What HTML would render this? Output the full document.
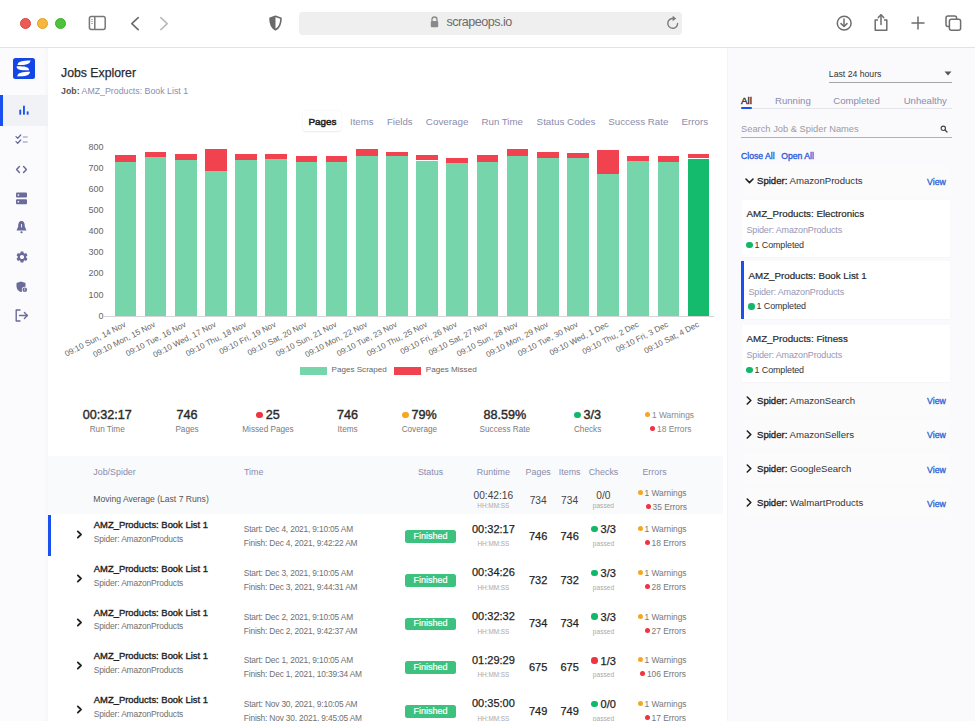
<!DOCTYPE html>
<html><head><meta charset="utf-8"><title>Jobs Explorer</title><style>
*{margin:0;padding:0;box-sizing:border-box}
html,body{width:975px;height:721px;overflow:hidden;background:#fff;font-family:"Liberation Sans",sans-serif}
#tb{position:absolute;left:0;top:0;width:975px;height:48px;background:#fff;border-bottom:1px solid #e3e3e3}
.dot{position:absolute;top:17.5px;width:11px;height:11px;border-radius:50%}
#addr{position:absolute;left:299px;top:12px;width:383px;height:23px;background:#efefef;border-radius:4px}
#sb{position:absolute;left:0;top:48px;width:48px;height:673px;background:#fbfbfd;box-shadow:inset -3px 0 3px -1px rgba(0,0,20,0.025)}
#sb svg{}
#rp{position:absolute;left:727px;top:48px;width:248px;height:673px;background:#fafafc;border-left:1px solid #f4f4f6}
.t{position:absolute;white-space:nowrap;line-height:1.15}
.lab{position:absolute;right:0;top:0;font-size:8.15px;color:#666;transform-origin:100% 0;transform:rotate(-27deg);line-height:9px}
.dd{display:inline-block;width:5px;height:5px;border-radius:50%;margin-right:2px;vertical-align:1px}
</style></head>
<body>

<div id="tb">
  <div class="dot" style="left:19.5px;background:#ee5b55;border:0.5px solid #d9473f"></div>
  <div class="dot" style="left:37px;background:#f6b73c;border:0.5px solid #dca12b"></div>
  <div class="dot" style="left:55px;background:#4fc23d;border:0.5px solid #3fae2f"></div>
  <svg style="position:absolute;left:88px;top:15px" width="19" height="16" viewBox="0 0 19 16">
    <rect x="1.4" y="1.6" width="15.8" height="12.8" rx="2" fill="none" stroke="#777" stroke-width="1.5"/>
    <line x1="6.8" y1="1.5" x2="6.8" y2="14" stroke="#777" stroke-width="1.5"/>
    <line x1="3.2" y1="4.5" x2="4.8" y2="4.5" stroke="#999" stroke-width="0.9"/>
    <line x1="3.2" y1="6.5" x2="4.8" y2="6.5" stroke="#999" stroke-width="0.9"/>
    <line x1="3.2" y1="8.5" x2="4.8" y2="8.5" stroke="#999" stroke-width="0.9"/>
  </svg>
  <svg style="position:absolute;left:128px;top:15px" width="14" height="17" viewBox="0 0 14 17">
    <polyline points="10.2,2.6 3.8,8.6 10.2,14.6" fill="none" stroke="#6e6e6e" stroke-width="1.7" stroke-linecap="round" stroke-linejoin="round"/>
  </svg>
  <svg style="position:absolute;left:157px;top:15px" width="14" height="17" viewBox="0 0 14 17">
    <polyline points="3.8,2.6 10.2,8.6 3.8,14.6" fill="none" stroke="#b9b9b9" stroke-width="1.5" stroke-linecap="round" stroke-linejoin="round"/>
  </svg>
  <svg style="position:absolute;left:268px;top:15px" width="15" height="16" viewBox="0 0 15 16">
    <path d="M7.5 1.2 L13 3.2 C13 9 11.5 12.6 7.5 14.8 C3.5 12.6 2 9 2 3.2 Z" fill="none" stroke="#6a6a6a" stroke-width="1.6" stroke-linejoin="round"/>
    <path d="M7.5 1.2 L2 3.2 C2 9 3.5 12.6 7.5 14.8 Z" fill="#6a6a6a"/>
  </svg>
  <div id="addr"></div>
  <svg style="position:absolute;left:430px;top:16px" width="9" height="12" viewBox="0 0 9 12">
    <path d="M2 5 V3.5 A2.5 2.5 0 0 1 7 3.5 V5" fill="none" stroke="#8a8a8a" stroke-width="1.3"/>
    <rect x="0.8" y="5" width="7.4" height="6.2" rx="1" fill="#8a8a8a"/>
  </svg>
  <div style="position:absolute;left:446.5px;top:15px;font-size:12.6px;color:#6c6c6c;letter-spacing:-0.52px">scrapeops.io</div>
  <svg style="position:absolute;left:666px;top:15.4px" width="14" height="15" viewBox="0 0 14 15">
    <path d="M11.6 8.4 A4.9 4.9 0 1 1 7.2 3.5" fill="none" stroke="#7a7a7a" stroke-width="1.4" stroke-linecap="round"/>
    <path d="M6.6 0.8 L10.2 3.5 L6.6 6.2 Z" fill="#7a7a7a"/>
  </svg>
  <svg style="position:absolute;left:835px;top:14px" width="18" height="18" viewBox="0 0 18 18">
    <circle cx="9.2" cy="9.2" r="6.9" fill="none" stroke="#6e6e6e" stroke-width="1.5"/>
    <line x1="9" y1="5" x2="9" y2="12.3" stroke="#6e6e6e" stroke-width="1.5" stroke-linecap="round"/>
    <polyline points="6,9.6 9,12.5 12,9.6" fill="none" stroke="#6e6e6e" stroke-width="1.5" stroke-linecap="round" stroke-linejoin="round"/>
  </svg>
  <svg style="position:absolute;left:872px;top:13px" width="18" height="19" viewBox="0 0 18 19">
    <path d="M6 7 H3.2 V17.2 H14.8 V7 H12" fill="none" stroke="#6e6e6e" stroke-width="1.5" stroke-linejoin="round"/>
    <line x1="9" y1="2" x2="9" y2="11.5" stroke="#6e6e6e" stroke-width="1.5" stroke-linecap="round"/>
    <polyline points="6.3,4.6 9,1.8 11.7,4.6" fill="none" stroke="#6e6e6e" stroke-width="1.5" stroke-linecap="round" stroke-linejoin="round"/>
  </svg>
  <svg style="position:absolute;left:910px;top:15px" width="16" height="16" viewBox="0 0 16 16">
    <line x1="8" y1="2" x2="8" y2="14" stroke="#6e6e6e" stroke-width="1.5" stroke-linecap="round"/>
    <line x1="2" y1="8" x2="14" y2="8" stroke="#6e6e6e" stroke-width="1.5" stroke-linecap="round"/>
  </svg>
  <svg style="position:absolute;left:944px;top:14px" width="19" height="18" viewBox="0 0 19 18">
    <path d="M5 12.6 H4 A2 2 0 0 1 2 10.6 V4 A2 2 0 0 1 4 2 H10.6 A2 2 0 0 1 12.6 4 V5" fill="none" stroke="#6e6e6e" stroke-width="1.5"/>
    <rect x="5.4" y="5.3" width="11.2" height="11" rx="2" fill="none" stroke="#6e6e6e" stroke-width="1.5"/>
  </svg>
</div>
<div id="sb"></div><svg style="position:absolute;left:13px;top:58px" width="22" height="21" viewBox="0 0 22 21">
      <rect x="0" y="0" width="22" height="21" rx="2.5" fill="#1446e6"/>
      <path d="M4.6 7.1 C4.2 3.2 10 2.4 17.6 2.4 C16.8 6.4 12.5 7.1 4.6 7.1 Z" fill="#fff"/>
      <path d="M3.6 8.2 C10 8.1 16.4 8.4 16.1 12.3 C9.5 12.4 3.4 12.2 3.6 8.2 Z" fill="#fff"/>
      <path d="M4.3 18.4 C4.4 14.6 9.5 13.8 17.1 13.8 C16.6 17.6 12.5 18.4 4.3 18.4 Z" fill="#fff"/>
    </svg><div style="position:absolute;left:0;top:95px;width:48px;height:31px;background:#f1f2f5"></div><div style="position:absolute;left:0;top:95px;width:3px;height:31px;background:#1a4ff0"></div><svg style="position:absolute;left:18px;top:104px" width="12" height="12" viewBox="0 0 12 12">
      <rect x="1.3" y="5.6" width="1.9" height="5.2" rx="0.9" fill="#1c55ee"/>
      <rect x="5" y="1.6" width="1.9" height="9.2" rx="0.9" fill="#1c55ee"/>
      <rect x="8.7" y="7.2" width="1.9" height="3.6" rx="0.9" fill="#1c55ee"/>
    </svg><svg style="position:absolute;left:15px;top:134px" width="14" height="11" viewBox="0 0 14 11">
      <polyline points="1,2.6 2.7,4.2 5.7,1" fill="none" stroke="#6a6b9b" stroke-width="1.3" stroke-linecap="round" stroke-linejoin="round"/>
      <polyline points="1,7.6 2.7,9.2 5.7,6" fill="none" stroke="#6a6b9b" stroke-width="1.3" stroke-linecap="round" stroke-linejoin="round"/>
      <line x1="7.8" y1="3" x2="12.6" y2="3" stroke="#6a6b9b" stroke-width="1" opacity="0.75"/>
      <line x1="7.8" y1="8" x2="12.6" y2="8" stroke="#6a6b9b" stroke-width="1" opacity="0.75"/>
    </svg><svg style="position:absolute;left:15px;top:165px" width="13" height="9" viewBox="0 0 13 9">
      <polyline points="4.4,1.5 1.6,4.5 4.4,7.5" fill="none" stroke="#6a6b9b" stroke-width="1.5" stroke-linecap="round" stroke-linejoin="round"/>
      <polyline points="8.6,1.5 11.4,4.5 8.6,7.5" fill="none" stroke="#6a6b9b" stroke-width="1.5" stroke-linecap="round" stroke-linejoin="round"/>
    </svg><svg style="position:absolute;left:16px;top:192px" width="11" height="13" viewBox="0 0 11 13">
      <rect x="0" y="0.5" width="11" height="5" rx="1" fill="#6a6b9b"/>
      <rect x="0" y="7.2" width="11" height="5" rx="1" fill="#6a6b9b"/>
      <rect x="1.6" y="2.3" width="1.5" height="1.4" fill="#fbfbfd"/>
      <rect x="1.6" y="9" width="1.5" height="1.4" fill="#fbfbfd"/>
    </svg><svg style="position:absolute;left:16px;top:220px" width="11" height="14" viewBox="0 0 11 14">
      <path d="M5.5 1 C8.2 1 8.8 3.6 8.8 6.4 L10.5 10.6 H0.5 L2.2 6.4 C2.2 3.6 2.8 1 5.5 1 Z" fill="#6a6b9b"/>
      <rect x="4.4" y="11.3" width="2.2" height="2" rx="1" fill="#6a6b9b"/>
      <line x1="5.5" y1="4" x2="5.5" y2="7.5" stroke="#f7f8fb" stroke-width="0.9"/>
    </svg><svg style="position:absolute;left:14.8px;top:249.6px" width="14" height="14" viewBox="0 0 24 24">
      <path fill="#6a6b9b" d="M19.14 12.94c.04-.3.06-.61.06-.94 0-.32-.02-.64-.07-.94l2.03-1.58a.49.49 0 0 0 .12-.61l-1.92-3.32a.488.488 0 0 0-.59-.22l-2.39.96c-.5-.38-1.03-.7-1.62-.94l-.36-2.54a.484.484 0 0 0-.48-.41h-3.84c-.24 0-.43.17-.47.41l-.36 2.54c-.59.24-1.13.57-1.62.94l-2.39-.96c-.22-.08-.47 0-.59.22L2.74 8.87c-.12.21-.08.47.12.61l2.03 1.58c-.05.3-.09.63-.09.94s.02.64.07.94l-2.03 1.58a.49.49 0 0 0-.12.61l1.92 3.32c.12.22.37.29.59.22l2.39-.96c.5.38 1.03.7 1.62.94l.36 2.54c.05.24.24.41.48.41h3.84c.24 0 .44-.17.47-.41l.36-2.54c.59-.24 1.13-.56 1.62-.94l2.39.96c.22.08.47 0 .59-.22l1.92-3.32c.12-.22.07-.47-.12-.61l-2.01-1.58zM12 15.6c-1.98 0-3.6-1.62-3.6-3.6s1.62-3.6 3.6-3.6 3.6 1.62 3.6 3.6-1.62 3.6-3.6 3.6z"/>
    </svg><svg style="position:absolute;left:16px;top:281px" width="12" height="12" viewBox="0 0 12 12">
      <path d="M5 0.5 L9.5 2 V5.2 C9.5 8 7.6 10.2 5 11 C2.4 10.2 0.5 8 0.5 5.2 V2 Z" fill="#6a6b9b"/>
      <circle cx="8.8" cy="8.8" r="3" fill="#fbfbfd"/>
      <circle cx="8.8" cy="8.8" r="2.3" fill="#6a6b9b"/>
      <rect x="8.45" y="7.4" width="0.7" height="1.6" fill="#fbfbfd"/>
      <rect x="8.45" y="9.5" width="0.7" height="0.7" fill="#fbfbfd"/>
    </svg><svg style="position:absolute;left:15px;top:309px" width="14" height="13" viewBox="0 0 14 13">
      <path d="M5.5 1 H1.2 V12 H5.5" fill="none" stroke="#6a6b9b" stroke-width="1.4" stroke-linejoin="round"/>
      <line x1="4.6" y1="6.5" x2="12.3" y2="6.5" stroke="#6a6b9b" stroke-width="1.4" stroke-linecap="round"/>
      <polyline points="9.4,3.6 12.4,6.5 9.4,9.4" fill="none" stroke="#6a6b9b" stroke-width="1.4" stroke-linecap="round" stroke-linejoin="round"/>
    </svg>
<div id="main">
<div class="t" style="left:61px;top:65.9px;font-size:12.27px;color:#2a2a33;font-weight:normal;-webkit-text-stroke-width:0.25px">Jobs Explorer</div><div class="t" style="left:61px;top:86px;font-size:8.8px;color:#8b8cae"><b style="color:#555;font-weight:bold">Job:</b> AMZ_Products: Book List 1</div><div style="position:absolute;left:303px;top:111px;width:38px;height:20px;background:#fff;border-radius:3px;box-shadow:0 0.5px 2px rgba(0,0,0,0.09)"></div><div class="t" style="left:308.5px;top:115.7px;font-size:9.87px;color:#222;font-weight:normal;-webkit-text-stroke-width:0.5px">Pages</div><div class="t" style="left:350px;top:116px;font-size:9.6px;color:#8a8cad;font-weight:normal;">Items</div><div class="t" style="left:387px;top:116px;font-size:9.6px;color:#8a8cad;font-weight:normal;">Fields</div><div class="t" style="left:425.8px;top:116px;font-size:9.85px;color:#8a8cad;font-weight:normal;">Coverage</div><div class="t" style="left:481.5px;top:116px;font-size:9.7px;color:#8a8cad;font-weight:normal;">Run Time</div><div class="t" style="left:536.6px;top:116px;font-size:9.8px;color:#8a8cad;font-weight:normal;">Status Codes</div><div class="t" style="left:608.2px;top:116px;font-size:9.77px;color:#8a8cad;font-weight:normal;">Success Rate</div><div class="t" style="left:681.6px;top:116px;font-size:9.77px;color:#8a8cad;font-weight:normal;">Errors</div>
<div class="t" style="left:60px;width:43.5px;text-align:right;top:310.7px;font-size:9px;line-height:11px;color:#666">0</div><div class="t" style="left:60px;width:43.5px;text-align:right;top:289.6px;font-size:9px;line-height:11px;color:#666">100</div><div class="t" style="left:60px;width:43.5px;text-align:right;top:268.4px;font-size:9px;line-height:11px;color:#666">200</div><div class="t" style="left:60px;width:43.5px;text-align:right;top:247.3px;font-size:9px;line-height:11px;color:#666">300</div><div class="t" style="left:60px;width:43.5px;text-align:right;top:226.1px;font-size:9px;line-height:11px;color:#666">400</div><div class="t" style="left:60px;width:43.5px;text-align:right;top:205.0px;font-size:9px;line-height:11px;color:#666">500</div><div class="t" style="left:60px;width:43.5px;text-align:right;top:183.9px;font-size:9px;line-height:11px;color:#666">600</div><div class="t" style="left:60px;width:43.5px;text-align:right;top:162.7px;font-size:9px;line-height:11px;color:#666">700</div><div class="t" style="left:60px;width:43.5px;text-align:right;top:141.6px;font-size:9px;line-height:11px;color:#666">800</div><div style="position:absolute;left:104px;top:316px;width:610px;height:1px;background:#d4d4d4"></div><div style="position:absolute;left:114.60px;top:155.3px;width:21.6px;height:6.4px;background:#f0424f"></div><div style="position:absolute;left:114.60px;top:161.7px;width:21.6px;height:154.5px;background:#76d5aa"></div><div style="position:absolute;left:122.90px;top:319.5px;width:0;height:0"><div class="t lab">09:10 Sun, 14 Nov</div></div><div style="position:absolute;left:144.77px;top:151.5px;width:21.6px;height:5.7px;background:#f0424f"></div><div style="position:absolute;left:144.77px;top:157.2px;width:21.6px;height:159.0px;background:#76d5aa"></div><div style="position:absolute;left:153.07px;top:319.5px;width:0;height:0"><div class="t lab">09:10 Mon, 15 Nov</div></div><div style="position:absolute;left:174.94px;top:154.3px;width:21.6px;height:5.9px;background:#f0424f"></div><div style="position:absolute;left:174.94px;top:160.2px;width:21.6px;height:156.0px;background:#76d5aa"></div><div style="position:absolute;left:183.24px;top:319.5px;width:0;height:0"><div class="t lab">09:10 Tue, 16 Nov</div></div><div style="position:absolute;left:205.11px;top:148.5px;width:21.6px;height:22.7px;background:#f0424f"></div><div style="position:absolute;left:205.11px;top:171.2px;width:21.6px;height:145.0px;background:#76d5aa"></div><div style="position:absolute;left:213.41px;top:319.5px;width:0;height:0"><div class="t lab">09:10 Wed, 17 Nov</div></div><div style="position:absolute;left:235.28px;top:154.4px;width:21.6px;height:5.3px;background:#f0424f"></div><div style="position:absolute;left:235.28px;top:159.7px;width:21.6px;height:156.5px;background:#76d5aa"></div><div style="position:absolute;left:243.58px;top:319.5px;width:0;height:0"><div class="t lab">09:10 Thu, 18 Nov</div></div><div style="position:absolute;left:265.45px;top:154.0px;width:21.6px;height:5.2px;background:#f0424f"></div><div style="position:absolute;left:265.45px;top:159.2px;width:21.6px;height:157.0px;background:#76d5aa"></div><div style="position:absolute;left:273.75px;top:319.5px;width:0;height:0"><div class="t lab">09:10 Fri, 19 Nov</div></div><div style="position:absolute;left:295.62px;top:155.6px;width:21.6px;height:6.2px;background:#f0424f"></div><div style="position:absolute;left:295.62px;top:161.8px;width:21.6px;height:154.4px;background:#76d5aa"></div><div style="position:absolute;left:303.92px;top:319.5px;width:0;height:0"><div class="t lab">09:10 Sat, 20 Nov</div></div><div style="position:absolute;left:325.79px;top:156.4px;width:21.6px;height:5.4px;background:#f0424f"></div><div style="position:absolute;left:325.79px;top:161.8px;width:21.6px;height:154.4px;background:#76d5aa"></div><div style="position:absolute;left:334.09px;top:319.5px;width:0;height:0"><div class="t lab">09:10 Sun, 21 Nov</div></div><div style="position:absolute;left:355.96px;top:149.4px;width:21.6px;height:6.5px;background:#f0424f"></div><div style="position:absolute;left:355.96px;top:155.9px;width:21.6px;height:160.3px;background:#76d5aa"></div><div style="position:absolute;left:364.26px;top:319.5px;width:0;height:0"><div class="t lab">09:10 Mon, 22 Nov</div></div><div style="position:absolute;left:386.13px;top:151.5px;width:21.6px;height:4.9px;background:#f0424f"></div><div style="position:absolute;left:386.13px;top:156.4px;width:21.6px;height:159.8px;background:#76d5aa"></div><div style="position:absolute;left:394.43px;top:319.5px;width:0;height:0"><div class="t lab">09:10 Tue, 23 Nov</div></div><div style="position:absolute;left:416.30px;top:155.3px;width:21.6px;height:5.2px;background:#f0424f"></div><div style="position:absolute;left:416.30px;top:160.5px;width:21.6px;height:155.7px;background:#76d5aa"></div><div style="position:absolute;left:424.60px;top:319.5px;width:0;height:0"><div class="t lab">09:10 Thu, 25 Nov</div></div><div style="position:absolute;left:446.47px;top:157.7px;width:21.6px;height:4.9px;background:#f0424f"></div><div style="position:absolute;left:446.47px;top:162.6px;width:21.6px;height:153.6px;background:#76d5aa"></div><div style="position:absolute;left:454.77px;top:319.5px;width:0;height:0"><div class="t lab">09:10 Fri, 26 Nov</div></div><div style="position:absolute;left:476.64px;top:155.1px;width:21.6px;height:6.6px;background:#f0424f"></div><div style="position:absolute;left:476.64px;top:161.7px;width:21.6px;height:154.5px;background:#76d5aa"></div><div style="position:absolute;left:484.94px;top:319.5px;width:0;height:0"><div class="t lab">09:10 Sat, 27 Nov</div></div><div style="position:absolute;left:506.81px;top:149.4px;width:21.6px;height:7.0px;background:#f0424f"></div><div style="position:absolute;left:506.81px;top:156.4px;width:21.6px;height:159.8px;background:#76d5aa"></div><div style="position:absolute;left:515.11px;top:319.5px;width:0;height:0"><div class="t lab">09:10 Sun, 28 Nov</div></div><div style="position:absolute;left:536.98px;top:151.5px;width:21.6px;height:6.2px;background:#f0424f"></div><div style="position:absolute;left:536.98px;top:157.7px;width:21.6px;height:158.5px;background:#76d5aa"></div><div style="position:absolute;left:545.28px;top:319.5px;width:0;height:0"><div class="t lab">09:10 Mon, 29 Nov</div></div><div style="position:absolute;left:567.15px;top:153.1px;width:21.6px;height:5.3px;background:#f0424f"></div><div style="position:absolute;left:567.15px;top:158.4px;width:21.6px;height:157.8px;background:#76d5aa"></div><div style="position:absolute;left:575.45px;top:319.5px;width:0;height:0"><div class="t lab">09:10 Tue, 30 Nov</div></div><div style="position:absolute;left:597.32px;top:150.2px;width:21.6px;height:23.8px;background:#f0424f"></div><div style="position:absolute;left:597.32px;top:174.0px;width:21.6px;height:142.2px;background:#76d5aa"></div><div style="position:absolute;left:605.62px;top:319.5px;width:0;height:0"><div class="t lab">09:10 Wed, 1 Dec</div></div><div style="position:absolute;left:627.49px;top:155.9px;width:21.6px;height:5.4px;background:#f0424f"></div><div style="position:absolute;left:627.49px;top:161.3px;width:21.6px;height:154.9px;background:#76d5aa"></div><div style="position:absolute;left:635.79px;top:319.5px;width:0;height:0"><div class="t lab">09:10 Thu, 2 Dec</div></div><div style="position:absolute;left:657.66px;top:156.1px;width:21.6px;height:5.6px;background:#f0424f"></div><div style="position:absolute;left:657.66px;top:161.7px;width:21.6px;height:154.5px;background:#76d5aa"></div><div style="position:absolute;left:665.96px;top:319.5px;width:0;height:0"><div class="t lab">09:10 Fri, 3 Dec</div></div><div style="position:absolute;left:687.83px;top:153.6px;width:21.6px;height:4.9px;background:#f0424f"></div><div style="position:absolute;left:687.83px;top:158.5px;width:21.6px;height:157.7px;background:#14bb6c"></div><div style="position:absolute;left:696.13px;top:319.5px;width:0;height:0"><div class="t lab">09:10 Sat, 4 Dec</div></div><div style="position:absolute;left:300px;top:366.5px;width:27px;height:8px;background:#76d5aa"></div><div class="t" style="left:331.5px;top:365px;font-size:8.1px;color:#666;font-weight:normal;">Pages Scraped</div><div style="position:absolute;left:394px;top:366.5px;width:27px;height:8px;background:#f0424f"></div><div class="t" style="left:425.8px;top:365px;font-size:8.1px;color:#666;font-weight:normal;">Pages Missed</div>
<div class="t" style="left:-42.8px;width:300px;text-align:center;top:408.4px;font-size:12.6px;color:#2a2a2a;font-weight:normal;-webkit-text-stroke-width:0.4px">00:32:17</div><div class="t" style="left:-42.8px;width:300px;text-align:center;top:424.7px;font-size:8.2px;color:#7b7b7b;font-weight:normal;">Run Time</div><div class="t" style="left:37px;width:300px;text-align:center;top:408.4px;font-size:12.6px;color:#2a2a2a;font-weight:normal;-webkit-text-stroke-width:0.4px">746</div><div class="t" style="left:37px;width:300px;text-align:center;top:424.7px;font-size:8.2px;color:#7b7b7b;font-weight:normal;">Pages</div><div class="t" style="left:118px;width:300px;text-align:center;top:408.4px;font-size:12.6px;color:#2a2a2a;-webkit-text-stroke-width:0.4px"><span style="display:inline-block;width:6.5px;height:6.5px;border-radius:50%;background:#ef3340;margin-right:3px;vertical-align:1px"></span>25</div><div class="t" style="left:118px;width:300px;text-align:center;top:424.7px;font-size:8.2px;color:#7b7b7b;font-weight:normal;">Missed Pages</div><div class="t" style="left:197.60000000000002px;width:300px;text-align:center;top:408.4px;font-size:12.6px;color:#2a2a2a;font-weight:normal;-webkit-text-stroke-width:0.4px">746</div><div class="t" style="left:197.60000000000002px;width:300px;text-align:center;top:424.7px;font-size:8.2px;color:#7b7b7b;font-weight:normal;">Items</div><div class="t" style="left:269.4px;width:300px;text-align:center;top:408.4px;font-size:12.6px;color:#2a2a2a;-webkit-text-stroke-width:0.4px"><span style="display:inline-block;width:6.5px;height:6.5px;border-radius:50%;background:#f5a623;margin-right:3px;vertical-align:1px"></span>79%</div><div class="t" style="left:269.4px;width:300px;text-align:center;top:424.7px;font-size:8.2px;color:#7b7b7b;font-weight:normal;">Coverage</div><div class="t" style="left:354.8px;width:300px;text-align:center;top:408.4px;font-size:12.6px;color:#2a2a2a;font-weight:normal;-webkit-text-stroke-width:0.4px">88.59%</div><div class="t" style="left:354.8px;width:300px;text-align:center;top:424.7px;font-size:8.2px;color:#7b7b7b;font-weight:normal;">Success Rate</div><div class="t" style="left:437.6px;width:300px;text-align:center;top:408.4px;font-size:12.6px;color:#2a2a2a;-webkit-text-stroke-width:0.4px"><span style="display:inline-block;width:6.5px;height:6.5px;border-radius:50%;background:#12b76a;margin-right:3px;vertical-align:1px"></span>3/3</div><div class="t" style="left:437.6px;width:300px;text-align:center;top:424.7px;font-size:8.2px;color:#7b7b7b;font-weight:normal;">Checks</div><div class="t" style="left:645px;top:411px;font-size:8.4px;color:#888"><span class="dd" style="background:#f5a623"></span>1 Warnings</div><div class="t" style="left:650px;top:424.8px;font-size:8.4px;color:#888"><span class="dd" style="background:#ef3340"></span>18 Errors</div>
<div style="position:absolute;left:48px;top:455.6px;width:675px;height:58.4px;background:#f9fafc"></div><div class="t" style="left:93.3px;top:466.5px;font-size:8.9px;color:#8a8cad;font-weight:normal;">Job/Spider</div><div class="t" style="left:244px;top:466.5px;font-size:8.9px;color:#8a8cad;font-weight:normal;">Time</div><div class="t" style="left:280.5px;width:300px;text-align:center;top:466.5px;font-size:8.9px;color:#8a8cad;font-weight:normal;">Status</div><div class="t" style="left:343.4px;width:300px;text-align:center;top:466.5px;font-size:8.9px;color:#8a8cad;font-weight:normal;">Runtime</div><div class="t" style="left:388.20000000000005px;width:300px;text-align:center;top:466.5px;font-size:8.9px;color:#8a8cad;font-weight:normal;">Pages</div><div class="t" style="left:419.70000000000005px;width:300px;text-align:center;top:466.5px;font-size:8.9px;color:#8a8cad;font-weight:normal;">Items</div><div class="t" style="left:453.5px;width:300px;text-align:center;top:466.5px;font-size:8.9px;color:#8a8cad;font-weight:normal;">Checks</div><div class="t" style="left:504.5px;width:300px;text-align:center;top:466.5px;font-size:8.9px;color:#8a8cad;font-weight:normal;">Errors</div><div class="t" style="left:93.3px;top:494.5px;font-size:8.6px;color:#555;font-weight:normal;">Moving Average (Last 7 Runs)</div><div class="t" style="left:343.3px;width:300px;text-align:center;top:490px;font-size:10.2px;color:#444;font-weight:normal;">00:42:16</div><div class="t" style="left:343.3px;width:300px;text-align:center;top:502px;font-size:6.4px;color:#a9a9a9;font-weight:normal;">HH:MM:SS</div><div class="t" style="left:388.20000000000005px;width:300px;text-align:center;top:495px;font-size:10.2px;color:#444;font-weight:normal;">734</div><div class="t" style="left:419.6px;width:300px;text-align:center;top:495px;font-size:10.2px;color:#444;font-weight:normal;">734</div><div class="t" style="left:453.4px;width:300px;text-align:center;top:490px;font-size:10.2px;color:#444;font-weight:normal;">0/0</div><div class="t" style="left:453.4px;width:300px;text-align:center;top:502px;font-size:6.6px;color:#a9a9a9;font-weight:normal;">passed</div><div class="t" style="left:637.5px;top:489px;font-size:8.4px;color:#777"><span class="dd" style="background:#f5a623"></span>1 Warnings</div><div class="t" style="left:645.5px;top:502.5px;font-size:8.4px;color:#777"><span class="dd" style="background:#ef3340"></span>35 Errors</div><div style="position:absolute;left:48px;top:515px;width:3px;height:41px;background:#1a4ff0"></div><svg style="position:absolute;left:75.5px;top:530.1px" width="7" height="9" viewBox="0 0 7 9"><polyline points="1.8,1.4 5,4.5 1.8,7.6" fill="none" stroke="#222" stroke-width="1.8" stroke-linecap="round" stroke-linejoin="round"/></svg><div class="t" style="left:93.8px;top:520.1px;font-size:9.43px;color:#1f1f1f;font-weight:normal;-webkit-text-stroke:0.35px #1f1f1f">AMZ_Products: Book List 1</div><div class="t" style="left:93.8px;top:534.8000000000001px;font-size:8.45px;color:#707070;font-weight:normal;letter-spacing:-0.16px">Spider: AmazonProducts</div><div class="t" style="left:243.8px;top:525.2px;font-size:8.4px;color:#707070;font-weight:normal;letter-spacing:-0.18px">Start: Dec 4, 2021, 9:10:05 AM</div><div class="t" style="left:243.8px;top:539.2px;font-size:8.4px;color:#707070;font-weight:normal;letter-spacing:-0.18px">Finish: Dec 4, 2021, 9:42:22 AM</div><div style="position:absolute;left:404.5px;top:530.1px;width:51.2px;height:12.8px;border-radius:2.5px;background:#3cc17f"></div><div class="t" style="left:280.5px;width:300px;text-align:center;top:530.0px;font-size:9.0px;color:#fff;font-weight:normal;line-height:12.5px;-webkit-text-stroke-width:0.2px">Finished</div><div class="t" style="left:343.4px;width:300px;text-align:center;top:522.6px;font-size:11px;color:#1f1f1f;font-weight:normal;-webkit-text-stroke-width:0.25px">00:32:17</div><div class="t" style="left:343.4px;width:300px;text-align:center;top:540.2px;font-size:6.4px;color:#a9a9a9;font-weight:normal;">HH:MM:SS</div><div class="t" style="left:388.20000000000005px;width:300px;text-align:center;top:529.9px;font-size:11px;color:#1f1f1f;font-weight:normal;-webkit-text-stroke-width:0.25px">746</div><div class="t" style="left:419.70000000000005px;width:300px;text-align:center;top:529.9px;font-size:11px;color:#1f1f1f;font-weight:normal;-webkit-text-stroke-width:0.25px">746</div><div class="t" style="left:453.5px;width:300px;text-align:center;top:523.4px;font-size:11px;color:#1f1f1f;-webkit-text-stroke-width:0.25px"><span style="display:inline-block;width:6.5px;height:6.5px;border-radius:50%;background:#12b76a;margin-right:3px;vertical-align:1px"></span>3/3</div><div class="t" style="left:453.5px;width:300px;text-align:center;top:540.2px;font-size:6.6px;color:#a9a9a9;font-weight:normal;">passed</div><div class="t" style="left:637.5px;top:525.1px;font-size:8.4px;color:#777"><span class="dd" style="background:#f5a623"></span>1 Warnings</div><div class="t" style="right:289px;top:539.1px;font-size:8.4px;color:#777"><span class="dd" style="background:#ef3340"></span>18 Errors</div><svg style="position:absolute;left:75.5px;top:573.8px" width="7" height="9" viewBox="0 0 7 9"><polyline points="1.8,1.4 5,4.5 1.8,7.6" fill="none" stroke="#222" stroke-width="1.8" stroke-linecap="round" stroke-linejoin="round"/></svg><div class="t" style="left:93.8px;top:563.8000000000001px;font-size:9.43px;color:#1f1f1f;font-weight:normal;-webkit-text-stroke:0.35px #1f1f1f">AMZ_Products: Book List 1</div><div class="t" style="left:93.8px;top:578.5000000000001px;font-size:8.45px;color:#707070;font-weight:normal;letter-spacing:-0.16px">Spider: AmazonProducts</div><div class="t" style="left:243.8px;top:568.9000000000001px;font-size:8.4px;color:#707070;font-weight:normal;letter-spacing:-0.18px">Start: Dec 3, 2021, 9:10:05 AM</div><div class="t" style="left:243.8px;top:582.9000000000001px;font-size:8.4px;color:#707070;font-weight:normal;letter-spacing:-0.18px">Finish: Dec 3, 2021, 9:44:31 AM</div><div style="position:absolute;left:404.5px;top:573.8px;width:51.2px;height:12.8px;border-radius:2.5px;background:#3cc17f"></div><div class="t" style="left:280.5px;width:300px;text-align:center;top:573.7px;font-size:9.0px;color:#fff;font-weight:normal;line-height:12.5px;-webkit-text-stroke-width:0.2px">Finished</div><div class="t" style="left:343.4px;width:300px;text-align:center;top:566.3000000000001px;font-size:11px;color:#1f1f1f;font-weight:normal;-webkit-text-stroke-width:0.25px">00:34:26</div><div class="t" style="left:343.4px;width:300px;text-align:center;top:583.9000000000001px;font-size:6.4px;color:#a9a9a9;font-weight:normal;">HH:MM:SS</div><div class="t" style="left:388.20000000000005px;width:300px;text-align:center;top:573.6px;font-size:11px;color:#1f1f1f;font-weight:normal;-webkit-text-stroke-width:0.25px">732</div><div class="t" style="left:419.70000000000005px;width:300px;text-align:center;top:573.6px;font-size:11px;color:#1f1f1f;font-weight:normal;-webkit-text-stroke-width:0.25px">732</div><div class="t" style="left:453.5px;width:300px;text-align:center;top:567.1px;font-size:11px;color:#1f1f1f;-webkit-text-stroke-width:0.25px"><span style="display:inline-block;width:6.5px;height:6.5px;border-radius:50%;background:#12b76a;margin-right:3px;vertical-align:1px"></span>3/3</div><div class="t" style="left:453.5px;width:300px;text-align:center;top:583.9000000000001px;font-size:6.6px;color:#a9a9a9;font-weight:normal;">passed</div><div class="t" style="left:637.5px;top:568.8px;font-size:8.4px;color:#777"><span class="dd" style="background:#f5a623"></span>1 Warnings</div><div class="t" style="right:289px;top:582.8px;font-size:8.4px;color:#777"><span class="dd" style="background:#ef3340"></span>28 Errors</div><svg style="position:absolute;left:75.5px;top:617.5px" width="7" height="9" viewBox="0 0 7 9"><polyline points="1.8,1.4 5,4.5 1.8,7.6" fill="none" stroke="#222" stroke-width="1.8" stroke-linecap="round" stroke-linejoin="round"/></svg><div class="t" style="left:93.8px;top:607.5px;font-size:9.43px;color:#1f1f1f;font-weight:normal;-webkit-text-stroke:0.35px #1f1f1f">AMZ_Products: Book List 1</div><div class="t" style="left:93.8px;top:622.2px;font-size:8.45px;color:#707070;font-weight:normal;letter-spacing:-0.16px">Spider: AmazonProducts</div><div class="t" style="left:243.8px;top:612.6px;font-size:8.4px;color:#707070;font-weight:normal;letter-spacing:-0.18px">Start: Dec 2, 2021, 9:10:05 AM</div><div class="t" style="left:243.8px;top:626.6px;font-size:8.4px;color:#707070;font-weight:normal;letter-spacing:-0.18px">Finish: Dec 2, 2021, 9:42:37 AM</div><div style="position:absolute;left:404.5px;top:617.5px;width:51.2px;height:12.8px;border-radius:2.5px;background:#3cc17f"></div><div class="t" style="left:280.5px;width:300px;text-align:center;top:617.4px;font-size:9.0px;color:#fff;font-weight:normal;line-height:12.5px;-webkit-text-stroke-width:0.2px">Finished</div><div class="t" style="left:343.4px;width:300px;text-align:center;top:610.0px;font-size:11px;color:#1f1f1f;font-weight:normal;-webkit-text-stroke-width:0.25px">00:32:32</div><div class="t" style="left:343.4px;width:300px;text-align:center;top:627.6px;font-size:6.4px;color:#a9a9a9;font-weight:normal;">HH:MM:SS</div><div class="t" style="left:388.20000000000005px;width:300px;text-align:center;top:617.3px;font-size:11px;color:#1f1f1f;font-weight:normal;-webkit-text-stroke-width:0.25px">734</div><div class="t" style="left:419.70000000000005px;width:300px;text-align:center;top:617.3px;font-size:11px;color:#1f1f1f;font-weight:normal;-webkit-text-stroke-width:0.25px">734</div><div class="t" style="left:453.5px;width:300px;text-align:center;top:610.8px;font-size:11px;color:#1f1f1f;-webkit-text-stroke-width:0.25px"><span style="display:inline-block;width:6.5px;height:6.5px;border-radius:50%;background:#12b76a;margin-right:3px;vertical-align:1px"></span>3/3</div><div class="t" style="left:453.5px;width:300px;text-align:center;top:627.6px;font-size:6.6px;color:#a9a9a9;font-weight:normal;">passed</div><div class="t" style="left:637.5px;top:612.5px;font-size:8.4px;color:#777"><span class="dd" style="background:#f5a623"></span>1 Warnings</div><div class="t" style="right:289px;top:626.5px;font-size:8.4px;color:#777"><span class="dd" style="background:#ef3340"></span>27 Errors</div><svg style="position:absolute;left:75.5px;top:661.2px" width="7" height="9" viewBox="0 0 7 9"><polyline points="1.8,1.4 5,4.5 1.8,7.6" fill="none" stroke="#222" stroke-width="1.8" stroke-linecap="round" stroke-linejoin="round"/></svg><div class="t" style="left:93.8px;top:651.2px;font-size:9.43px;color:#1f1f1f;font-weight:normal;-webkit-text-stroke:0.35px #1f1f1f">AMZ_Products: Book List 1</div><div class="t" style="left:93.8px;top:665.9000000000001px;font-size:8.45px;color:#707070;font-weight:normal;letter-spacing:-0.16px">Spider: AmazonProducts</div><div class="t" style="left:243.8px;top:656.3000000000001px;font-size:8.4px;color:#707070;font-weight:normal;letter-spacing:-0.18px">Start: Dec 1, 2021, 9:10:05 AM</div><div class="t" style="left:243.8px;top:670.3000000000001px;font-size:8.4px;color:#707070;font-weight:normal;letter-spacing:-0.18px">Finish: Dec 1, 2021, 10:39:34 AM</div><div style="position:absolute;left:404.5px;top:661.2px;width:51.2px;height:12.8px;border-radius:2.5px;background:#3cc17f"></div><div class="t" style="left:280.5px;width:300px;text-align:center;top:661.1px;font-size:9.0px;color:#fff;font-weight:normal;line-height:12.5px;-webkit-text-stroke-width:0.2px">Finished</div><div class="t" style="left:343.4px;width:300px;text-align:center;top:653.7px;font-size:11px;color:#1f1f1f;font-weight:normal;-webkit-text-stroke-width:0.25px">01:29:29</div><div class="t" style="left:343.4px;width:300px;text-align:center;top:671.3000000000001px;font-size:6.4px;color:#a9a9a9;font-weight:normal;">HH:MM:SS</div><div class="t" style="left:388.20000000000005px;width:300px;text-align:center;top:661.0px;font-size:11px;color:#1f1f1f;font-weight:normal;-webkit-text-stroke-width:0.25px">675</div><div class="t" style="left:419.70000000000005px;width:300px;text-align:center;top:661.0px;font-size:11px;color:#1f1f1f;font-weight:normal;-webkit-text-stroke-width:0.25px">675</div><div class="t" style="left:453.5px;width:300px;text-align:center;top:654.5px;font-size:11px;color:#1f1f1f;-webkit-text-stroke-width:0.25px"><span style="display:inline-block;width:6.5px;height:6.5px;border-radius:50%;background:#ef3340;margin-right:3px;vertical-align:1px"></span>1/3</div><div class="t" style="left:453.5px;width:300px;text-align:center;top:671.3000000000001px;font-size:6.6px;color:#a9a9a9;font-weight:normal;">passed</div><div class="t" style="left:637.5px;top:656.2px;font-size:8.4px;color:#777"><span class="dd" style="background:#f5a623"></span>1 Warnings</div><div class="t" style="right:289px;top:670.2px;font-size:8.4px;color:#777"><span class="dd" style="background:#ef3340"></span>106 Errors</div><svg style="position:absolute;left:75.5px;top:704.9px" width="7" height="9" viewBox="0 0 7 9"><polyline points="1.8,1.4 5,4.5 1.8,7.6" fill="none" stroke="#222" stroke-width="1.8" stroke-linecap="round" stroke-linejoin="round"/></svg><div class="t" style="left:93.8px;top:694.9000000000001px;font-size:9.43px;color:#1f1f1f;font-weight:normal;-webkit-text-stroke:0.35px #1f1f1f">AMZ_Products: Book List 1</div><div class="t" style="left:93.8px;top:709.6000000000001px;font-size:8.45px;color:#707070;font-weight:normal;letter-spacing:-0.16px">Spider: AmazonProducts</div><div class="t" style="left:243.8px;top:700.0000000000001px;font-size:8.4px;color:#707070;font-weight:normal;letter-spacing:-0.18px">Start: Nov 30, 2021, 9:10:05 AM</div><div class="t" style="left:243.8px;top:714.0000000000001px;font-size:8.4px;color:#707070;font-weight:normal;letter-spacing:-0.18px">Finish: Nov 30, 2021, 9:45:05 AM</div><div style="position:absolute;left:404.5px;top:704.9px;width:51.2px;height:12.8px;border-radius:2.5px;background:#3cc17f"></div><div class="t" style="left:280.5px;width:300px;text-align:center;top:704.8000000000001px;font-size:9.0px;color:#fff;font-weight:normal;line-height:12.5px;-webkit-text-stroke-width:0.2px">Finished</div><div class="t" style="left:343.4px;width:300px;text-align:center;top:697.4000000000001px;font-size:11px;color:#1f1f1f;font-weight:normal;-webkit-text-stroke-width:0.25px">00:35:00</div><div class="t" style="left:343.4px;width:300px;text-align:center;top:715.0000000000001px;font-size:6.4px;color:#a9a9a9;font-weight:normal;">HH:MM:SS</div><div class="t" style="left:388.20000000000005px;width:300px;text-align:center;top:704.7px;font-size:11px;color:#1f1f1f;font-weight:normal;-webkit-text-stroke-width:0.25px">749</div><div class="t" style="left:419.70000000000005px;width:300px;text-align:center;top:704.7px;font-size:11px;color:#1f1f1f;font-weight:normal;-webkit-text-stroke-width:0.25px">749</div><div class="t" style="left:453.5px;width:300px;text-align:center;top:698.2px;font-size:11px;color:#1f1f1f;-webkit-text-stroke-width:0.25px"><span style="display:inline-block;width:6.5px;height:6.5px;border-radius:50%;background:#12b76a;margin-right:3px;vertical-align:1px"></span>0/0</div><div class="t" style="left:453.5px;width:300px;text-align:center;top:715.0000000000001px;font-size:6.6px;color:#a9a9a9;font-weight:normal;">passed</div><div class="t" style="left:637.5px;top:699.9px;font-size:8.4px;color:#777"><span class="dd" style="background:#f5a623"></span>1 Warnings</div><div class="t" style="right:289px;top:713.9px;font-size:8.4px;color:#777"><span class="dd" style="background:#ef3340"></span>17 Errors</div>
</div>
<div id="rp"></div><div class="t" style="left:828.8px;top:69px;font-size:8.7px;color:#333;font-weight:normal;">Last 24 hours</div><svg style="position:absolute;left:944px;top:71px" width="8" height="5" viewBox="0 0 8 5"><path d="M0.5 0.5 H7.5 L4 4.5 Z" fill="#555"/></svg><div style="position:absolute;left:828.8px;top:81.5px;width:123px;height:1px;background:#a5a5aa"></div><div class="t" style="left:741px;top:95px;font-size:9.9px;color:#222;font-weight:normal;-webkit-text-stroke-width:0.3px">All</div><div class="t" style="left:775px;top:95px;font-size:9.6px;color:#8a8cad;font-weight:normal;">Running</div><div class="t" style="left:833.2px;top:95px;font-size:9.65px;color:#8a8cad;font-weight:normal;">Completed</div><div class="t" style="left:903.7px;top:95px;font-size:9.6px;color:#8a8cad;font-weight:normal;">Unhealthy</div><div style="position:absolute;left:741px;top:108px;width:211px;height:1px;background:#e4e4ea"></div><div style="position:absolute;left:741px;top:107px;width:11px;height:2px;background:#1a4ff0;border-radius:1px"></div><div class="t" style="left:741px;top:123.5px;font-size:9.34px;color:#9a9aa6;font-weight:normal;">Search Job &amp; Spider Names</div><svg style="position:absolute;left:939.5px;top:124.5px" width="8" height="8" viewBox="0 0 8 8"><circle cx="3.3" cy="3.3" r="2.2" fill="none" stroke="#444" stroke-width="1.1"/><line x1="5" y1="5" x2="7" y2="7" stroke="#444" stroke-width="1.3" stroke-linecap="round"/></svg><div style="position:absolute;left:741px;top:137px;width:211px;height:1px;background:#b0b0b5"></div><div class="t" style="left:741px;top:152.2px;font-size:8.65px;color:#2f5fd8;font-weight:normal;-webkit-text-stroke-width:0.35px">Close All</div><div class="t" style="left:781.2px;top:152.2px;font-size:8.65px;color:#2f5fd8;font-weight:normal;-webkit-text-stroke-width:0.35px">Open All</div><div style="position:absolute;left:743px;top:166.0px;width:207px;height:30px;background:#fbfbfc"></div><svg style="position:absolute;left:744.5px;top:178.0px" width="9" height="6" viewBox="0 0 9 6"><polyline points="1,1 4.5,4.6 8,1" fill="none" stroke="#222" stroke-width="1.6" stroke-linecap="round" stroke-linejoin="round"/></svg><div class="t" style="left:757px;top:175.2px;font-size:9.6px;color:#333"><span style="-webkit-text-stroke-width:0.3px;color:#222">Spider:</span> AmazonProducts</div><div class="t" style="left:927px;top:177.1px;font-size:8.8px;color:#2f5fd8;font-weight:normal;-webkit-text-stroke-width:0.3px">View</div><div style="position:absolute;left:742px;top:199.7px;width:208px;height:57.3px;background:#fff;box-shadow:0 0.5px 1.5px rgba(0,0,0,0.05)"></div><div class="t" style="left:746.5px;top:208.0px;font-size:9.75px;color:#2a2a2a;font-weight:normal;-webkit-text-stroke:0.2px #2a2a2a">AMZ_Products: Electronics</div><div class="t" style="left:746.5px;top:225.2px;font-size:9.0px;color:#9697b8;font-weight:normal;letter-spacing:-0.16px">Spider: AmazonProducts</div><div style="position:absolute;left:746.0px;top:241.8px;width:6.5px;height:6.5px;border-radius:50%;background:#12b76a"></div><div class="t" style="left:754.6px;top:239.79999999999998px;font-size:8.95px;color:#333;font-weight:normal;letter-spacing:-0.12px">1 Completed</div><div style="position:absolute;left:742px;top:261.3px;width:208px;height:57.3px;background:#fff;box-shadow:0 0.5px 1.5px rgba(0,0,0,0.05)"></div><div style="position:absolute;left:740.8px;top:261.3px;width:2.9px;height:58px;background:#1a4ff0"></div><div class="t" style="left:748.5px;top:269.6px;font-size:9.75px;color:#2a2a2a;font-weight:normal;-webkit-text-stroke:0.2px #2a2a2a">AMZ_Products: Book List 1</div><div class="t" style="left:748.5px;top:286.8px;font-size:9.0px;color:#9697b8;font-weight:normal;letter-spacing:-0.16px">Spider: AmazonProducts</div><div style="position:absolute;left:748.0px;top:303.4px;width:6.5px;height:6.5px;border-radius:50%;background:#12b76a"></div><div class="t" style="left:756.6px;top:301.40000000000003px;font-size:8.95px;color:#333;font-weight:normal;letter-spacing:-0.12px">1 Completed</div><div style="position:absolute;left:742px;top:324.6px;width:208px;height:57.3px;background:#fff;box-shadow:0 0.5px 1.5px rgba(0,0,0,0.05)"></div><div class="t" style="left:746.5px;top:332.90000000000003px;font-size:9.75px;color:#2a2a2a;font-weight:normal;-webkit-text-stroke:0.2px #2a2a2a">AMZ_Products: Fitness</div><div class="t" style="left:746.5px;top:350.1px;font-size:9.0px;color:#9697b8;font-weight:normal;letter-spacing:-0.16px">Spider: AmazonProducts</div><div style="position:absolute;left:746.0px;top:366.8px;width:6.5px;height:6.5px;border-radius:50%;background:#12b76a"></div><div class="t" style="left:754.6px;top:364.70000000000005px;font-size:8.95px;color:#333;font-weight:normal;letter-spacing:-0.12px">1 Completed</div><div style="position:absolute;left:743px;top:385.3px;width:207px;height:30px;background:#fbfbfc"></div><svg style="position:absolute;left:746px;top:395.8px" width="6" height="9" viewBox="0 0 6 9"><polyline points="1.3,1 4.8,4.5 1.3,8" fill="none" stroke="#222" stroke-width="1.6" stroke-linecap="round" stroke-linejoin="round"/></svg><div class="t" style="left:757px;top:394.5px;font-size:9.6px;color:#333"><span style="-webkit-text-stroke-width:0.3px;color:#222">Spider:</span> AmazonSearch</div><div class="t" style="left:927px;top:396.40000000000003px;font-size:8.8px;color:#2f5fd8;font-weight:normal;-webkit-text-stroke-width:0.3px">View</div><div style="position:absolute;left:743px;top:419.3px;width:207px;height:30px;background:#fbfbfc"></div><svg style="position:absolute;left:746px;top:429.8px" width="6" height="9" viewBox="0 0 6 9"><polyline points="1.3,1 4.8,4.5 1.3,8" fill="none" stroke="#222" stroke-width="1.6" stroke-linecap="round" stroke-linejoin="round"/></svg><div class="t" style="left:757px;top:428.5px;font-size:9.6px;color:#333"><span style="-webkit-text-stroke-width:0.3px;color:#222">Spider:</span> AmazonSellers</div><div class="t" style="left:927px;top:430.40000000000003px;font-size:8.8px;color:#2f5fd8;font-weight:normal;-webkit-text-stroke-width:0.3px">View</div><div style="position:absolute;left:743px;top:453.4px;width:207px;height:30px;background:#fbfbfc"></div><svg style="position:absolute;left:746px;top:463.9px" width="6" height="9" viewBox="0 0 6 9"><polyline points="1.3,1 4.8,4.5 1.3,8" fill="none" stroke="#222" stroke-width="1.6" stroke-linecap="round" stroke-linejoin="round"/></svg><div class="t" style="left:757px;top:462.6px;font-size:9.6px;color:#333"><span style="-webkit-text-stroke-width:0.3px;color:#222">Spider:</span> GoogleSearch</div><div class="t" style="left:927px;top:464.5px;font-size:8.8px;color:#2f5fd8;font-weight:normal;-webkit-text-stroke-width:0.3px">View</div><div style="position:absolute;left:743px;top:487.9px;width:207px;height:30px;background:#fbfbfc"></div><svg style="position:absolute;left:746px;top:498.4px" width="6" height="9" viewBox="0 0 6 9"><polyline points="1.3,1 4.8,4.5 1.3,8" fill="none" stroke="#222" stroke-width="1.6" stroke-linecap="round" stroke-linejoin="round"/></svg><div class="t" style="left:757px;top:497.1px;font-size:9.6px;color:#333"><span style="-webkit-text-stroke-width:0.3px;color:#222">Spider:</span> WalmartProducts</div><div class="t" style="left:927px;top:499.0px;font-size:8.8px;color:#2f5fd8;font-weight:normal;-webkit-text-stroke-width:0.3px">View</div>
</body></html>
